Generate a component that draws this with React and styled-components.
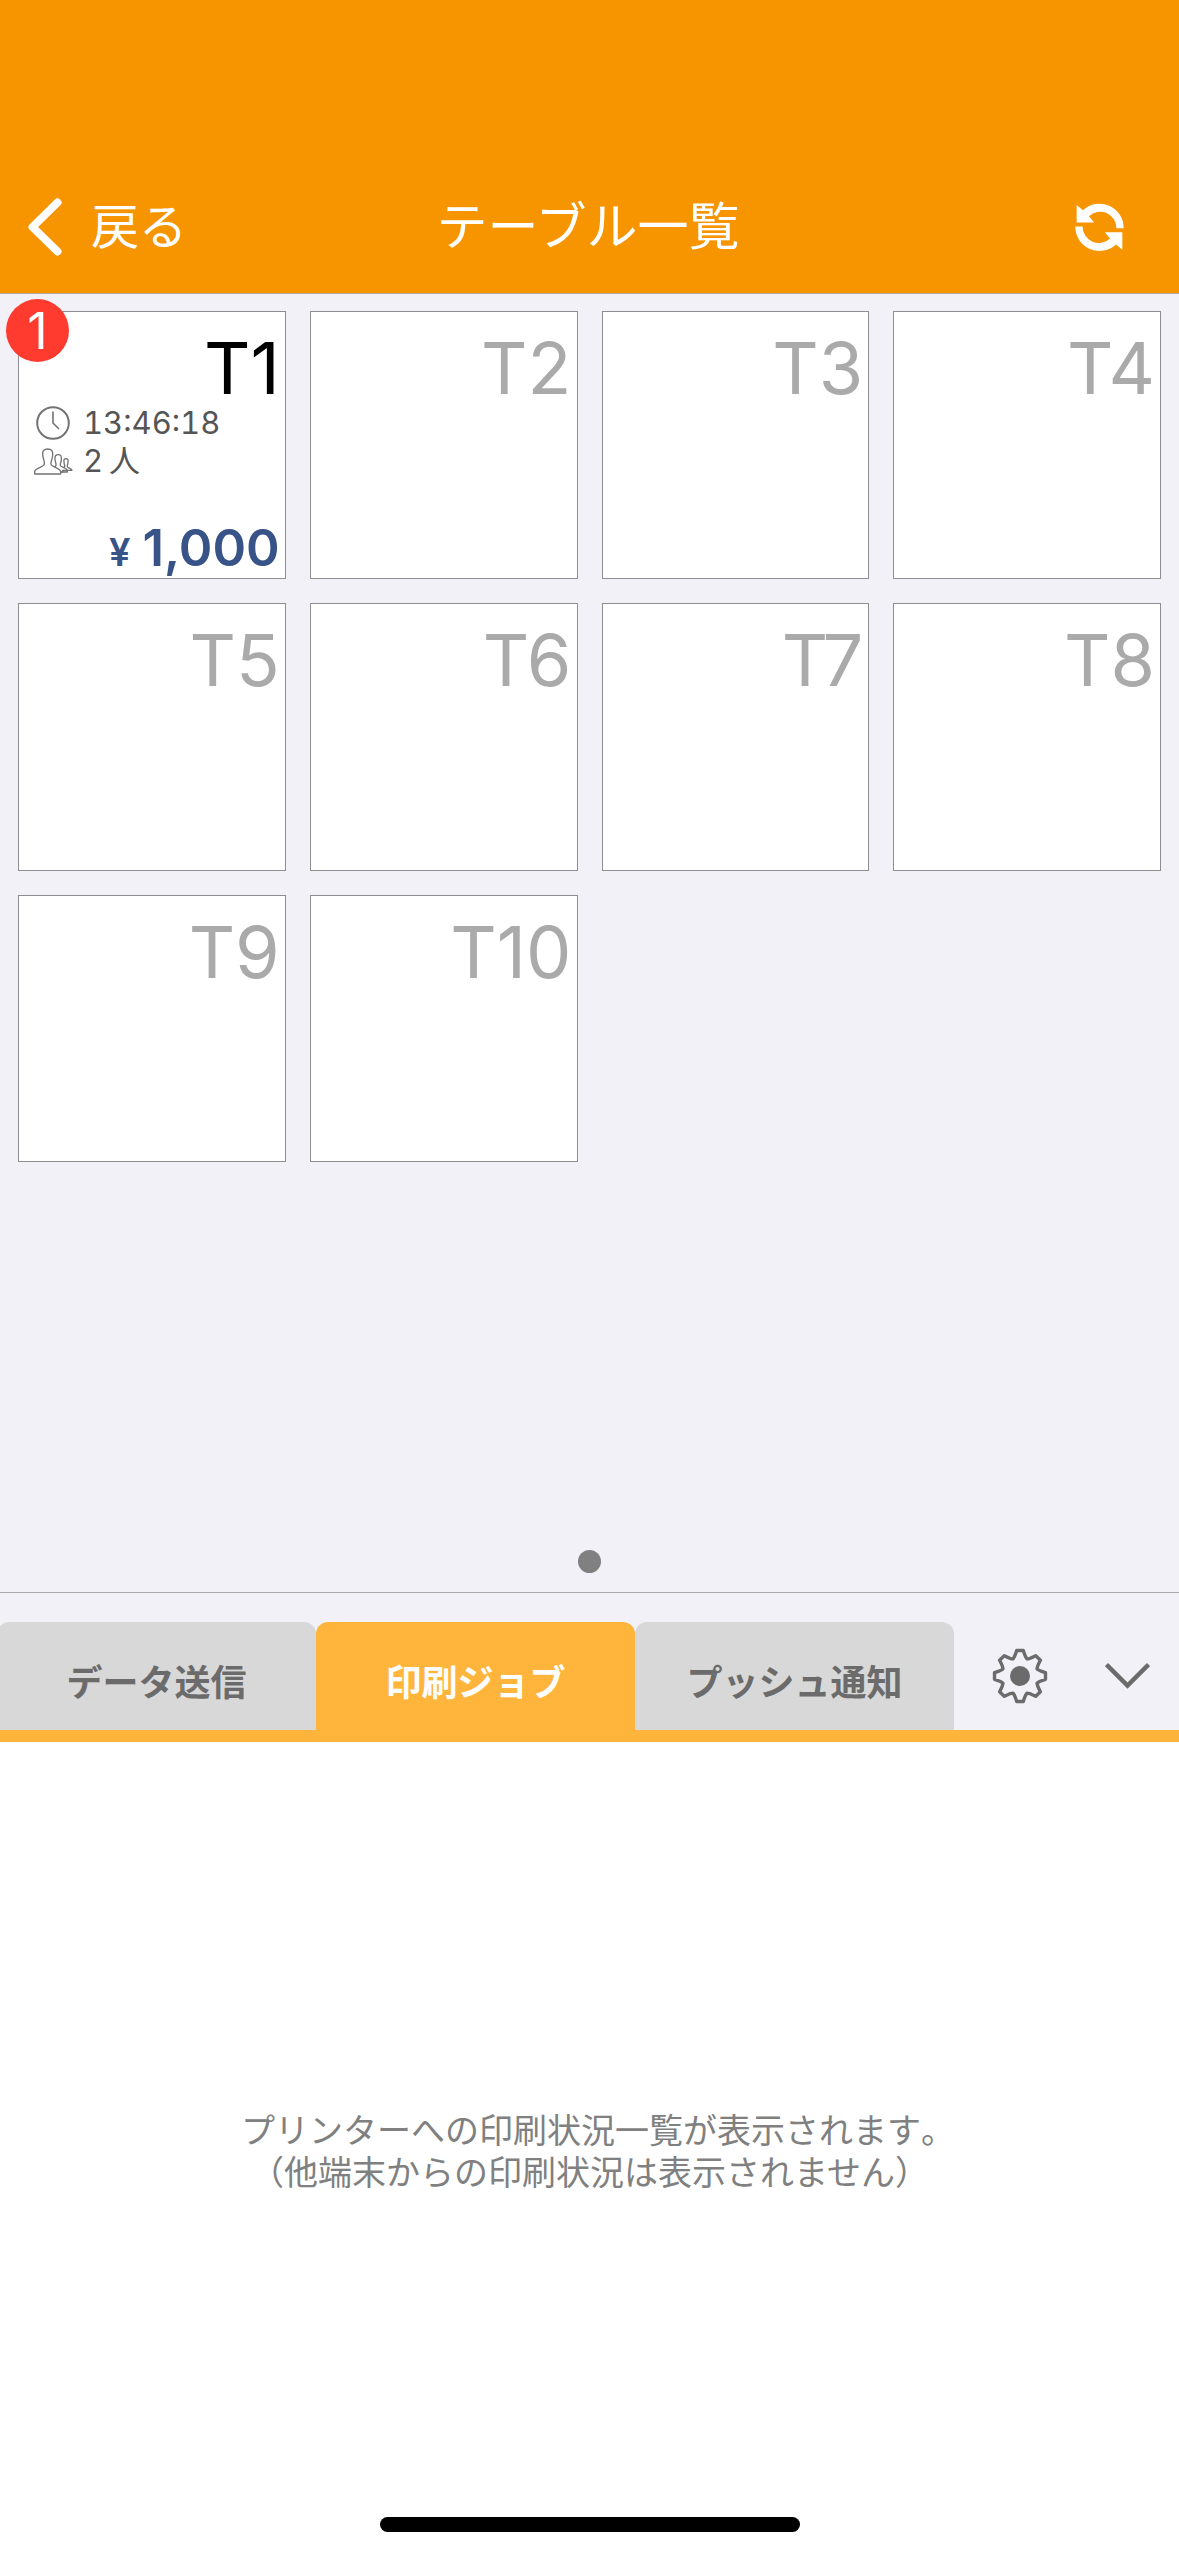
import React, { useState } from "react";
import styled, { createGlobalStyle } from "styled-components";

const GlobalStyle = createGlobalStyle`
  *, *::before, *::after { box-sizing: border-box; }
  body {
    margin: 0;
    background: #f2f1f7;
    font-family: Inter, "Noto Sans CJK JP", sans-serif;
  }
  button {
    margin: 0;
    padding: 0;
    border: 0;
    background: none;
    font: inherit;
    color: inherit;
  }
  svg { display: block; flex: none; }
`;

const Screen = styled.div`
  position: relative;
  display: flex;
  flex-direction: column;
  min-height: 100vh;
`;

const Header = styled.header`
  display: grid;
  grid-template-columns: 1fr auto 1fr;
  align-items: center;
  padding: 161px 55px 0 28px;
  border-bottom: 1px solid #b0a89c;
  background: #f79500;
  color: #fff;
`;

const BackButton = styled.button`
  justify-self: start;
  display: flex;
  align-items: center;
  gap: 29px;
  height: 132px;
  font-size: 48px;
  line-height: 60px;
`;

const Title = styled.h1`
  margin: 0 0 0 24px;
  font-size: 51px;
  font-weight: 400;
  line-height: 60px;
`;

const RefreshButton = styled.button`
  justify-self: end;
`;

const TableArea = styled.main`
  flex: 1;
  display: flex;
  flex-direction: column;
  padding: 17px 18px 19px;
`;

const TableGrid = styled.div`
  display: grid;
  grid-template-columns: repeat(4, 1fr);
  gap: 24px;
`;

const TableCard = styled.button`
  position: relative;
  display: flex;
  flex-direction: column;
  aspect-ratio: 1;
  min-width: 0;
  padding: 20px 5px 0 14px;
  border: 1px solid #8e8e90;
  background: #fff;
  text-align: left;
`;

const TableName = styled.span`
  align-self: flex-end;
  font-size: 72px;
  line-height: 72px;
  color: ${(p) => (p.$occupied ? "#000" : "#aaa")};
`;

const Detail = styled.span`
  display: grid;
  grid-template-columns: 40px auto;
  gap: 10px;
  align-items: center;
  justify-items: start;
  font-size: 31px;
  line-height: 38px;
  font-variant-numeric: tabular-nums;
  color: #555;

  svg { justify-self: center; }
`;

const Unit = styled.span`
  margin-left: 6px;
`;

const Price = styled.span`
  display: flex;
  align-items: baseline;
  justify-content: flex-end;
  gap: 12px;
  margin-top: auto;
  font-size: 51px;
  font-weight: 600;
  line-height: 60px;
  color: #375387;
`;

const Currency = styled.span`
  font-size: 38px;
  line-height: 38px;
`;

const Badge = styled.span`
  position: absolute;
  top: -13px;
  left: -13px;
  display: grid;
  place-items: center;
  width: 63px;
  height: 63px;
  border-radius: 50%;
  background: #ff3b30;
  font-size: 50px;
  line-height: 60px;
  color: #fff;
`;

const PageDot = styled.span`
  align-self: center;
  width: 23px;
  height: 23px;
  margin-top: auto;
  border-radius: 50%;
  background: #808080;
`;

const Drawer = styled.section`
  display: flex;
  flex-direction: column;
  min-height: 964px;
  padding-top: 29px;
  border-top: 1px solid #aaa;
`;

const TabBar = styled.div`
  display: flex;
  border-bottom: 12px solid #ffb53c;
`;

const TabList = styled.div`
  flex: 0 0 calc(81% + 2px);
  display: grid;
  grid-template-columns: repeat(3, 1fr);
  margin-left: -3px;
`;

const Tab = styled.button`
  height: 108px;
  padding-top: 14px;
  border-radius: 12px 12px 0 0;
  background: ${(p) => (p.$active ? "#ffb53c" : "#d8d8d8")};
  color: ${(p) => (p.$active ? "#fff" : "#6b6b6b")};
  font-size: 36px;
  font-weight: 700;
  line-height: 48px;
`;

const Tools = styled.div`
  flex: 1;
  display: flex;
  align-items: center;
  justify-content: space-between;
  padding: 0 29px 0 38px;
  color: #6b6b6b;
`;

const Panel = styled.div`
  flex: 1;
  display: grid;
  place-items: center;
  padding-top: 6px;
  background: #fff;
`;

const Message = styled.p`
  margin: 0;
  font-size: 34px;
  line-height: 42px;
  text-align: center;
  color: #808080;
`;

const Stop = styled.span`
  font-feature-settings: "halt";
`;

const HomeIndicator = styled.div`
  position: absolute;
  bottom: 24px;
  left: 50%;
  width: 420px;
  height: 15px;
  border-radius: 8px;
  background: #000;
  transform: translateX(-50%);
`;

const BackIcon = () => (
  <svg width="34" height="58" viewBox="0 0 34 58" fill="none" stroke="#fff" strokeWidth="8" strokeLinecap="round" strokeLinejoin="round" aria-hidden="true">
    <path d="M29.500 4.500L4.500 29L29.500 53.500" />
  </svg>
);

const RefreshIcon = () => (
  <svg width="49" height="49" viewBox="284 96 148 148" fill="#fff" aria-hidden="true">
    <path d="M431 172A73 73 0 0 0 308 118L289 102V155H342L326 136A49 49 0 0 1 409 172Z" />
    <path d="M285 167A73 73 0 0 0 408 221L427 237V184H374L390 203A49 49 0 0 1 307 167Z" />
  </svg>
);

const ClockIcon = () => (
  <svg width="34" height="34" viewBox="0 0 34 34" fill="none" stroke="#737373" aria-hidden="true">
    <circle cx="17" cy="17" r="15.800" strokeWidth="2" />
    <path d="M17 5.500V17L23 23" strokeWidth="1.600" />
  </svg>
);

const PeopleIcon = () => (
  <svg width="39" height="27" viewBox="100 474 117 81" fill="#fff" stroke="#737373" strokeWidth="4" strokeLinejoin="round" aria-hidden="true">
    <path d="M184 546H200V541L214 541C213 535 201 534 200 530C199 526 202 523 202 516C203 509 201 506 196 506C191 506 189 509 190 516C190 523 193 525 192 530C190 534 184 536 184 540Z" />
    <path d="M160 546H186V541H200C198 533 180 532 179 526C178 521 182 517 182 508C183 498 180 494 173 494C165 494 162 498 163 508C164 517 167 521 166 526C165 530 158 532 158 540Z" />
    <path d="M102 552H180V545C180 534 153 531 151 523C149 515 156 508 156 494C157 482 151 477 141 477C131 477 125 482 126 494C127 508 133 515 131 523C129 531 102 534 102 545Z" />
  </svg>
);

const polar = (angle, radius, side) => {
  const x = 28 + radius * Math.sin(angle) + side * Math.cos(angle);
  const y = 28 - radius * Math.cos(angle) + side * Math.sin(angle);
  return `${x.toFixed(2)} ${y.toFixed(2)}`;
};

const gearPath =
  Array.from({ length: 8 }, (_, i) => {
    const a = (i * Math.PI) / 4;
    const half = Math.PI / 8;
    const start = i === 0 ? `M${polar(a - half, 18.5, 0)}` : "";
    return `${start}Q${polar(a, 18.5, -5.5)} ${polar(a, 25.5, -3.3)}L${polar(a, 25.5, 3.3)}Q${polar(a, 18.5, 5.5)} ${polar(a + half, 18.5, 0)}`;
  }).join("") + "Z";

const GearIcon = () => (
  <svg width="56" height="56" viewBox="0 0 56 56" fill="none" stroke="currentColor" strokeWidth="3.400" strokeLinejoin="round" aria-hidden="true">
    <path d={gearPath} />
    <circle cx="28" cy="28" r="10" fill="currentColor" stroke="none" />
  </svg>
);

const CollapseIcon = () => (
  <svg width="45" height="28" viewBox="0 0 45 28" fill="none" stroke="currentColor" strokeWidth="4.500" aria-hidden="true">
    <path d="M1.500 2.500L22.500 23.500L43.500 2.500" />
  </svg>
);

const tables = [
  { name: "T1", alerts: 1, time: "13:46:18", guests: 2, total: "1,000" },
  ...Array.from({ length: 9 }, (_, i) => ({ name: `T${i + 2}` })),
];

const tabs = ["データ送信", "印刷ジョブ", "プッシュ通知"];

function TableTile({ table }) {
  const occupied = Boolean(table.time);
  return (
    <TableCard type="button">
      <TableName $occupied={occupied}>{table.name}</TableName>
      {occupied && (
        <>
          <Detail>
            <ClockIcon />
            <span>{table.time}</span>
          </Detail>
          <Detail>
            <PeopleIcon />
            <span>
              {table.guests}
              <Unit>人</Unit>
            </span>
          </Detail>
          <Price>
            <Currency>¥</Currency>
            <span>{table.total}</span>
          </Price>
          <Badge>{table.alerts}</Badge>
        </>
      )}
    </TableCard>
  );
}

export default function App() {
  const [active, setActive] = useState(1);
  return (
    <>
      <GlobalStyle />
      <Screen>
        <Header>
          <BackButton type="button">
            <BackIcon />
            <span>戻る</span>
          </BackButton>
          <Title>テーブル一覧</Title>
          <RefreshButton type="button" aria-label="更新">
            <RefreshIcon />
          </RefreshButton>
        </Header>
        <TableArea>
          <TableGrid>
            {tables.map((t) => (
              <TableTile key={t.name} table={t} />
            ))}
          </TableGrid>
          <PageDot />
        </TableArea>
        <Drawer>
          <TabBar>
            <TabList role="tablist">
              {tabs.map((label, i) => (
                <Tab key={label} type="button" role="tab" aria-selected={i === active} $active={i === active} onClick={() => setActive(i)}>
                  {label}
                </Tab>
              ))}
            </TabList>
            <Tools>
              <button type="button" aria-label="設定">
                <GearIcon />
              </button>
              <button type="button" aria-label="閉じる">
                <CollapseIcon />
              </button>
            </Tools>
          </TabBar>
          <Panel role="tabpanel">
            <Message>
              プリンターへの印刷状況一覧が表示されます<Stop>。</Stop>
              <br />
              （他端末からの印刷状況は表示されません）
            </Message>
          </Panel>
        </Drawer>
        <HomeIndicator />
      </Screen>
    </>
  );
}
